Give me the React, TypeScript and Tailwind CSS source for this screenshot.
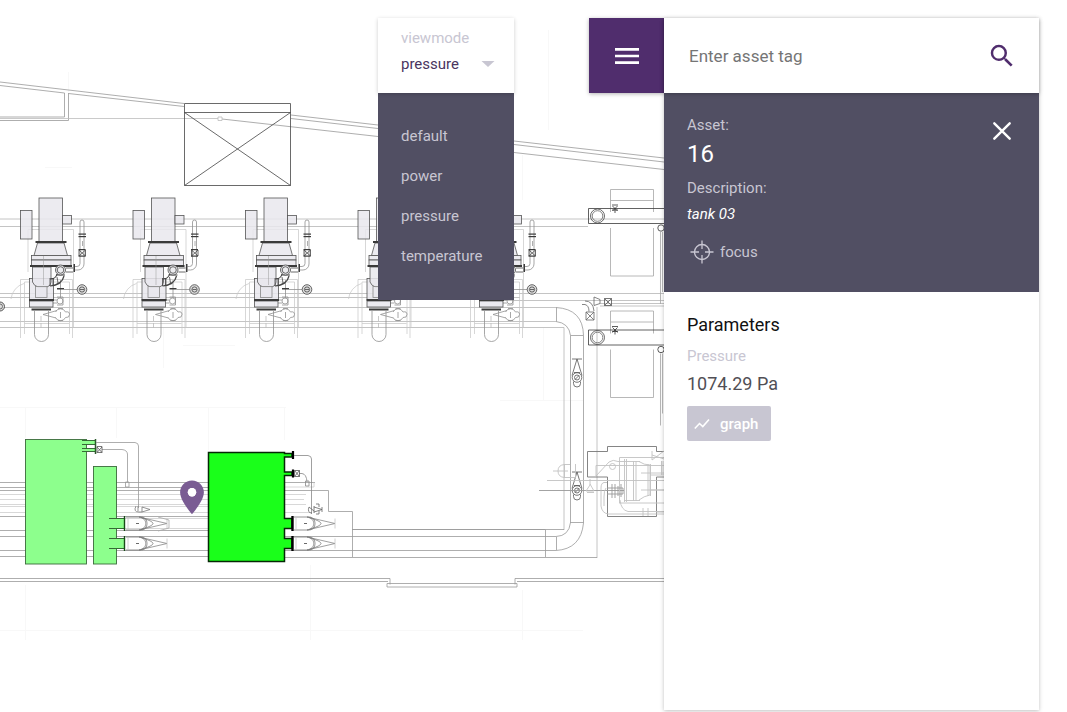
import { useState } from "react";
import { MdMenu, MdSearch } from "react-icons/md";

const MODES = ["default", "power", "pressure", "temperature"];
const PUMP_OFFSETS = [0, 112.5, 225, 337.5, 450];

function Pump({ dx }: { dx: number }) {
  return (
    <g transform={`translate(${dx} 0)`} fill="none" stroke="#666" strokeWidth="0.8">
      <g stroke="#c6c6c6" strokeWidth="0.7">
        <path d="M28 272V229.500H73.500V327M20.500 338V279.500H72.500V338M24.500 334V282H69.500V334M24.500 323.500H69" />
        <path d="M11 299A18 18 0 0 1 24 283.500" />
      </g>
      <g stroke="#909090">
        <path d="M34.500 311V334.500a7 7 0 0 0 14 0V311" />
        <path d="M41 316V330" strokeDasharray="5 2" stroke="#bbb" />
        <path d="M55.500 312a5.500 5.500 0 0 1 10 0q4-1 4 2.500t-4 3a5.500 5.500 0 0 1-10 0" />
        <path d="M43 314.500L57 310.500M43 314.500L56 318M58 308.500h5M58 320.500h5M60.500 312v6" />
        <circle cx="60" cy="301" r="3" />
        <path d="M57 297h6v8h-6M53 300h4M53 303h4" />
        <path d="M60.500 280V298M64 289.500H77" />
        <path d="M75 266.500H77a3 3 0 0 0 3-3V222a2 2 0 0 1 4 0V264a6 6 0 0 1-6 6h-3" />
      </g>
      <g fill="#e9e8ed" fillOpacity="0.85" stroke="#555">
        <rect x="39" y="198" width="23.500" height="43.500" />
        <rect x="20.500" y="210.500" width="11.500" height="28.500" />
        <rect x="62.500" y="215.500" width="9" height="8.500" />
        <path d="M37.500 243L34 255.500H67.500L64 243z" />
        <rect x="31.500" y="255.500" width="39.500" height="4.500" />
        <rect x="31.500" y="260" width="39.500" height="5.500" />
        <rect x="29.500" y="278.500" width="24" height="21" />
        <path d="M32.500 267V282Q34 286 38 287H47Q51 286 51 282V267z" />
        <rect x="35.500" y="286.500" width="11.500" height="11" stroke="#888" />
        <rect x="29.500" y="301" width="23.500" height="6" />
      </g>
      <g fill="#3a3a3a" stroke="none">
        <rect x="35.500" y="241" width="31" height="2" />
        <rect x="30" y="265" width="42" height="2" />
        <rect x="29" y="299" width="25" height="2" />
        <rect x="31.500" y="308.500" width="19.500" height="2" />
        <rect x="73.500" y="264" width="1.500" height="8" />
        <rect x="57" y="288" width="7" height="1.500" />
        <rect x="78.500" y="233.500" width="7.500" height="1.200" />
        <rect x="78.500" y="236" width="7.500" height="1.200" />
        <rect x="78.500" y="249" width="7" height="1.200" />
        <rect x="78.500" y="255.500" width="7" height="1.200" />
      </g>
      <g stroke="#444">
        <path d="M66 268h7M66 272h7M50 278v8M53 278v7M57 277l1 6" />
        <path d="M50 279Q56 279 57 274M50 286Q62 285 64 276M56 275h9" strokeWidth="1.200" />
        <circle cx="60.500" cy="270" r="5" fill="#ececef" />
        <circle cx="60.500" cy="270" r="3.300" />
        <path d="M79 250L85.500 256M85.500 250L79 256M79 250V256M85.500 250V256" />
        <path d="M82.500 241V246" stroke="#999" />
        <circle cx="82" cy="289.500" r="4.800" fill="#ddd" />
        <circle cx="82" cy="289.500" r="2.600" />
        <path d="M80 289.500h4" />
      </g>
      <path d="M43.500 256V285" stroke="#999" strokeWidth="0.5" />
    </g>
  );
}

function Nozzle({ x, y, strong }: { x: number; y: number; strong?: boolean }) {
  return (
    <g fill="none" stroke="#777" strokeWidth="0.8">
      <path d={`M${x + 1} ${y - 6.5}h15c8 0 8 13 0 13h-15M${x + 14} ${y - 6.5}c9 1 9 12 0 13M${x + 16} ${y - 6}c10 3 12 5 12 6s-2 3-12 6`} />
      <path d={`M${x + 14} ${y - 6.5}L${x + 42} ${y}L${x + 14} ${y + 6.5}`} strokeWidth="0.7" />
      <path d={`M${x + 42} ${y - 5}v10M${x + 3} ${y - 6}v12`} stroke="#c4c4c4" />
      <path d={`M${x + 11} ${y}h3`} stroke="#444" />
      <path d={`M${x - 0.5} ${y - 7.5}v15`} stroke={strong ? "#000" : "#184b18"} strokeWidth={strong ? 2.4 : 1.4} />
    </g>
  );
}

function Skid({ dy }: { dy: number }) {
  return (
    <g transform={`translate(0 ${dy})`} fill="none" stroke="#a6a6a6" strokeWidth="0.8">
      <path d="M610.500 212V189.500H653.500V212M610.500 200.500H653.500M610.500 228V276H653.500V228" />
      <path d="M660.500 232V304M662.500 232V292" />
      <path d="M664 208.500H588.500V223.500H664" stroke="#3a3a3a" />
      <circle cx="597.500" cy="216" r="7" stroke="#444" />
      <circle cx="597.500" cy="216" r="5.300" stroke="#666" />
      <circle cx="661" cy="228" r="3.200" stroke="#333" />
      <path d="M612 205h6M612.500 206l5 5M617.500 206l-5 5M615 208v5M612 210h6" stroke="#333" />
    </g>
  );
}

function InlineValve({ y }: { y: number }) {
  return (
    <g fill="none" stroke="#555" strokeWidth="0.8">
      <path d={`M572 ${y - 18.5}h10M577 ${y - 18.5}L572 ${y - 2}M577 ${y - 18.5}L582 ${y - 2}M574 ${y - 5}h6`} />
      <circle cx="577" cy={y} r="4.800" />
      <circle cx="577" cy={y} r="2.500" />
      <path d={`M573.500 ${y + 4}v2a3.500 3.500 0 0 0 7 0v-2M575 ${y + 2}l4-4`} />
    </g>
  );
}

function FloorPlan() {
  return (
    <svg className="absolute inset-0 h-full w-full" role="img" aria-label="Floor plan">
      <g fill="none" stroke="#f8f8f8" strokeWidth="1">
        <path d="M0 407.500H286M25.500 407V438M25.500 585V640M116.500 407V438M208.500 408V450M284.500 408V440M310.500 565V640M0 630.500H583M163.500 328V368M522.500 590V640M500 400.500H583M548.500 30V130M68.500 72V92M45 167.500H72M183 345.500H235M522.500 155V200M543.500 328V401" />
      </g>

      <g fill="none" stroke="#999" strokeWidth="0.8">
        <path d="M0 82L184 103.500M291 115L378 125L514 141L664 158" />
        <path d="M0 85.500L64.500 93M68.500 93.500L184 106.500M291 118.500L378 128.500L514 144.500L664 162" />
        <path d="M222 119L378 136.500L514 152.500L664 169.500" />
        <path d="M64.500 93V117M68.500 93V120.500H0M0 117H64.500" />
        <path d="M0 118.500H218M218 117h4v3.500h-4z" stroke="#bdbdbd" />
        <path d="M184.500 103.500V185.500H290.500V103.500zM184.500 112.500H290.500M184.500 112.500L290.500 185.500M290.500 112.500L184.500 185.500" stroke="#444" />
      </g>

      <g fill="none" stroke="#b5b5b5" strokeWidth="0.8">
        <path d="M0 219H664M0 226.500H588M0 293.500H664M0 297.500H520" />
        <path d="M0 307.500H556M0 321.500H556M0 327.500H564V530" />
        <path d="M500 300.500H664M600 303.500H664M600 306H664M597 307V558" />
      </g>
      <g fill="none" stroke="#999" strokeWidth="0.8">
        <path d="M556.500 307.500V321.500M556 307.500Q583 309 583.500 335.500V523Q581 549 556 550.500M556 321.500Q569 323 570.500 335.500V523M570.500 335.500H583.500M570.500 522.500H583.500M556 550.500H352M570.500 522.500Q569 536 556 536.500H352" />
        <path d="M352 529.500H564M545.500 529.500V557M556.500 537V550" />
        <path d="M594 297l6 2.500v4l-6 2zM582 304.500h3q4 1 4 7M585 301q8 0 9 10M586 312h8M586 320h8V312M586 312V320M586 312l8 8M594 312l-8 8" stroke="#666" />
        <path d="M604.500 298.500h7v7h-7zM604.500 298.500l7 7M611.500 298.500l-7 7" stroke="#555" />
      </g>

      {PUMP_OFFSETS.map((dx) => (
        <Pump key={dx} dx={dx} />
      ))}
      <circle cx="0" cy="306.500" r="4.500" fill="#ddd" stroke="#333" strokeWidth="0.8" />
      <circle cx="0" cy="306.500" r="2.500" fill="none" stroke="#555" strokeWidth="0.8" />

      <Skid dy={0} />
      <Skid dy={121.5} />
      <InlineValve y={377.5} />
      <InlineValve y={490.5} />

      <g fill="none" stroke="#777" strokeWidth="0.9">
        <path d="M664 451.500H656.500V446.500H607.500V451.500H587.500V477H607.500V516.500H656.500V477H664" />
      </g>
      <g fill="none" stroke="#c2c2c2" strokeWidth="0.9">
        <path d="M547 480.500H664M596 465.500H664M596 465.500V476L609 462Q613 459 618 461.500H624" />
        <path d="M539 490.500H624" stroke="#999" />
        <circle cx="612.500" cy="466.500" r="3" />
        <path d="M619.500 503V457.500H664M624.500 459V502M626.500 459V502M633.500 461V501M636 461V501M639 461.500Q644 465 650 465V495Q644 496 639 500M648 464V496M650.500 464V496M624 461.500H640M624 500.500H640M641 473H664M641 490H664M619 503H664M661.500 461V475M663 461V475M651 475H664M651 490H664" />
        <path d="M652 451V460M652 460L664 451M652 455L664 459" />
        <path d="M607 482.500H604Q601 483 601 488V506Q602 513 608 514H664M606 488Q604 490 604 497V506M620 500Q621 510 628 511.500H664M643 508V516M648 508V516M656 512h8" />
        <path d="M607 488h16v6h-16M612 484v14M615 484v14M618 486v10M621 484v13" stroke="#999" />
        <path d="M570 464.500H564.500Q558 465 558 471T564.500 477.500H575M564.500 464V478M575.500 464V478M553 471H568" />
        <path d="M590 479V485L586 491H594L590 484M587 492.500h7" />
      </g>

      <g fill="none" stroke="#999" strokeWidth="0.8">
        <path d="M0 482.500H315M0 487.500H208M0 490.500H328.500V511.500H352.500V557M0 516.500H208M0 530.500H208M0 536.500H352M0 550.500H352M0 556.500H208M285 557.500H597M352 529.500H545" />
        <path d="M0 494.500H306M0 499.500H304M0 504.500H306M0 506.500H208M0 512.500H310M285 487H314V482.500M125 518.500H208M125 528.500H208" stroke="#cecece" />
        <path d="M0 578.500H390V584.500M664 578.500H515V584.500" />
        <path d="M0 581.500H388M517 581.500H664M387 583.500H517V587H387z" />
      </g>

      <g fill="#8dff8d" stroke="#3b6a3b" strokeWidth="0.9">
        <rect x="25.500" y="439.500" width="61" height="124.500" />
        <rect x="93.500" y="466.500" width="23" height="97.500" />
      </g>
      <path d="M109 518h15v11h-15zM109 538h15v11h-15zM82 440.500h13v4h-13zM82 448.500h13v3h-13z" fill="#8dff8d" />
      <g fill="none" stroke="#2b5a2b" strokeWidth="0.9">
        <path d="M109 518.500H125M109 528.500H125M109 538.500H125M109 548.500H125M82 440.500H95M82 444.500H95M82 448.500H95M82 451.500H95" />
        <path d="M95.500 439V454" strokeWidth="1.500" />
      </g>
      <g fill="none" stroke="#999" strokeWidth="0.8">
        <path d="M96 442.500H135Q138.500 443 138.500 446V508M102 449.500H122Q127 450 127.500 454V482M125.500 482h3.500v5h-3.500z" />
        <path d="M97 447l5 5.500M102 447l-5 5.500M97 446.500h5v6h-5z" stroke="#555" />
        <path d="M136 506q-3 6 3 6h3M142 507l8 2.500l-8 2.500zM138 506v5" stroke="#777" />
      </g>
      <Nozzle x={125} y={523.5} />
      <Nozzle x={125} y={543.5} />
      <path d="M158 517l11 3v8l-11 3" fill="none" stroke="#aaa" strokeWidth="0.8" />

      <path d="M208.500 452.500H284.500V453.500H292V457H284.500V472H292V475.500H284.500V518.500H292V528.500H284.500V538.500H292V548.500H284.500V561.500H208.500z" fill="#1aff1a" stroke="#062806" strokeWidth="1.500" />
      <path d="M293 451V459M293 469.500V477.500" stroke="#000" strokeWidth="2.200" />
      <g fill="none" stroke="#888" strokeWidth="0.8">
        <path d="M294 455.500H308Q311.500 456 311.500 459V514M299 473.500H302Q306.500 474 307 482M305.500 481h3.500v5h-3.500z" />
        <path d="M294.500 470.500h5v6h-5zM294.500 470.500l5 6M299.500 470.500l-5 6" stroke="#555" />
        <path d="M309 507q-2 6 3 6M314 506v7M316 504h3v3M316 514h3v-3M314 507l8 2.500l-8 2.500M322 507v5M309 507l5 4" stroke="#666" />
      </g>
      <Nozzle x={293} y={523.5} strong />
      <Nozzle x={293} y={543.5} strong />

      <path
        transform="translate(171.600 477.200) scale(1.700 1.680)"
        fill="#7a5c93"
        fillRule="evenodd"
        d="M12 2C8.130 2 5 5.130 5 9c0 5.250 7 13 7 13s7-7.750 7-13c0-3.870-3.130-7-7-7zm0 9.500a2.500 2.500 0 1 1 0-5 2.500 2.500 0 0 1 0 5z"
      />
      <circle cx="192" cy="492.300" r="4.200" fill="#fff" />
    </svg>
  );
}

export default function App() {
  const [mode, setMode] = useState("pressure");

  return (
    <div className="relative h-screen overflow-hidden bg-white font-['Roboto',sans-serif] text-[15px] leading-5">
      <FloorPlan />

      <div className="relative flex h-full items-start justify-end pt-[18px] pr-7 pb-0.5">
        <section className="mr-[75px] w-[136px]">
          <div className="relative z-10 h-[75px] bg-white px-[23px] pt-2.5 shadow-[0_1px_4px_rgba(0,0,0,0.2)]">
            <label htmlFor="viewmode" className="block text-[#c8c6d2]">
              viewmode
            </label>
            <div className="mt-1.5 flex items-center">
              <select
                id="viewmode"
                value={mode}
                onChange={(e) => setMode(e.target.value)}
                className="w-20 appearance-none bg-transparent text-[#4a3560] outline-none"
              >
                {MODES.map((m) => (
                  <option key={m}>{m}</option>
                ))}
              </select>
              <svg width="14" height="6" viewBox="0 0 14 6" className="shrink-0" aria-hidden="true">
                <path d="M0.500 0H13.500L7 6z" fill="#c8c6d2" />
              </svg>
            </div>
          </div>
          <ul className="bg-[#514f63] pt-[23px] pb-6">
            {MODES.map((m) => (
              <li key={m}>
                <button
                  type="button"
                  onClick={() => setMode(m)}
                  className="block h-10 w-full px-[23px] text-left text-[#c8c6d2]"
                >
                  {m}
                </button>
              </li>
            ))}
          </ul>
        </section>

        <button
          type="button"
          aria-label="Menu"
          className="flex size-[75px] items-center justify-center bg-[#502d6d] text-white shadow-[0_1px_4px_rgba(0,0,0,0.3)]"
        >
          <MdMenu size={32} />
        </button>

        <aside className="flex h-full w-[375px] flex-col bg-white shadow-[0_1px_4px_rgba(0,0,0,0.25)]">
          <form
            className="relative z-10 flex h-[75px] shrink-0 items-center justify-between bg-white pr-[22px] pl-[25px] shadow-[0_1px_4px_rgba(0,0,0,0.25)]"
            onSubmit={(e) => e.preventDefault()}
          >
            <input
              type="text"
              aria-label="Enter asset tag"
              placeholder="Enter asset tag"
              className="min-w-0 flex-1 text-[17px] text-[#333] outline-none placeholder:text-[#757575]"
            />
            <button type="submit" aria-label="Search" className="text-[#502d6d]">
              <MdSearch size={30} />
            </button>
          </form>

          <section className="flex shrink-0 items-start justify-between bg-[#514f63] px-[23px] pt-[22px] pb-7 text-[#c8c6d2]">
            <div>
              <p>Asset:</p>
              <p className="mt-[5px] text-2xl leading-7 text-white">16</p>
              <p className="mt-2.5">Description:</p>
              <p className="mt-1.5 text-white italic">tank 03</p>
              <button type="button" className="mt-4 flex h-6 items-center gap-1.5 pl-[3px]">
                <svg width="24" height="24" viewBox="0 0 24 24" fill="none" stroke="currentColor" strokeWidth="1.300" aria-hidden="true">
                  <circle cx="12" cy="12" r="7.500" />
                  <path d="M12 0.500V9M12 15V23.500M0.500 12H9M15 12H23.500" />
                </svg>
                focus
              </button>
            </div>
            <button type="button" aria-label="Close" className="mt-1.5 mr-1 text-white">
              <svg width="20" height="20" viewBox="0 0 20 20" fill="none" stroke="currentColor" strokeWidth="2.400" strokeLinecap="round" aria-hidden="true">
                <path d="M2.300 2.300L17.700 17.700M17.700 2.300L2.300 17.700" />
              </svg>
            </button>
          </section>

          <section className="px-[23px] pt-[21px]">
            <h2 className="text-lg leading-6 text-[#111]">Parameters</h2>
            <p className="mt-[9px] text-[#c8c6d2]">Pressure</p>
            <p className="mt-1.5 text-lg leading-6 text-[#514f55]">1074.29 Pa</p>
            <button
              type="button"
              className="mt-2.5 flex h-[35px] w-[84px] items-center gap-2.5 rounded-xs bg-[#c8c6d2] pl-[7px] font-medium text-white"
            >
              <svg width="16" height="12" viewBox="0 0 16 12" fill="none" stroke="currentColor" strokeWidth="1.600" aria-hidden="true">
                <path d="M0.800 10.500L5.500 5.500L8.800 8.500L15 1.500" />
              </svg>
              graph
            </button>
          </section>
        </aside>
      </div>
    </div>
  );
}
